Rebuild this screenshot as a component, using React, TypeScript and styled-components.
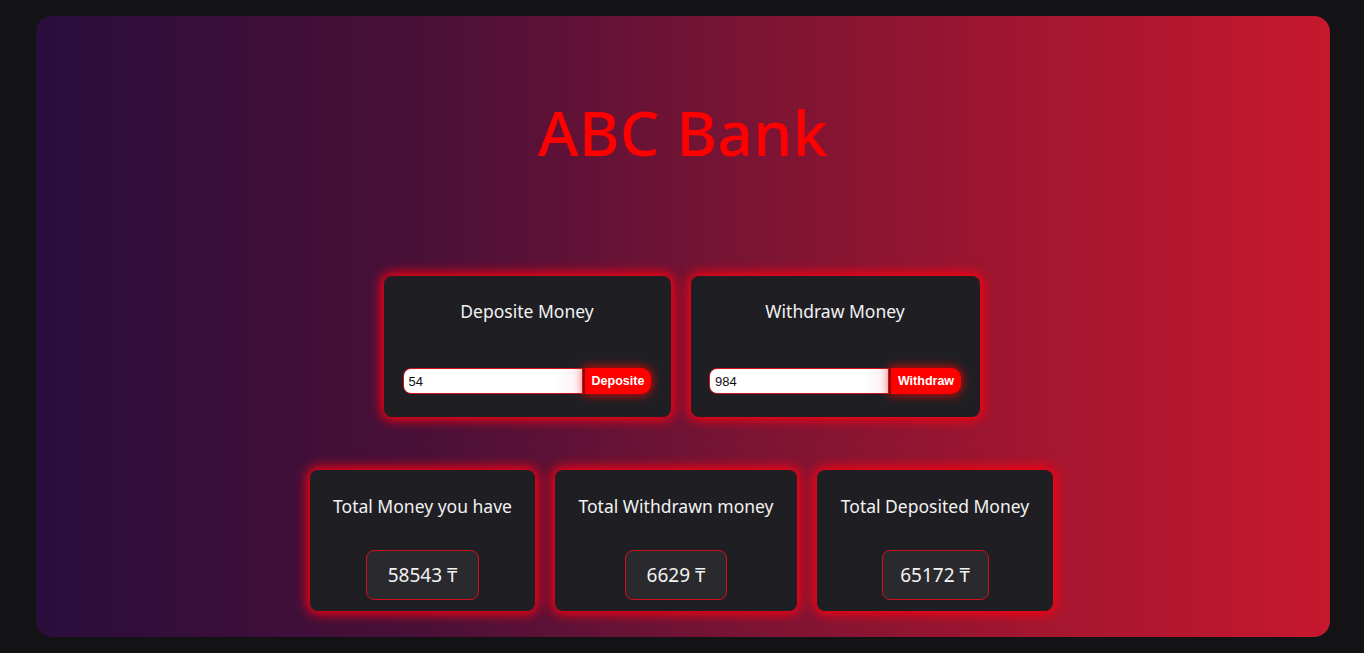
import React from "react";
import styled, { createGlobalStyle } from "styled-components";

const Global = createGlobalStyle`
  html, body { margin: 0; padding: 0; background: #131316; }
  body { font-family: "Noto Sans", "DejaVu Sans", sans-serif; }
  * { box-sizing: border-box; }
`;

const Page = styled.div`
  padding: 16px 34px 16px 36px;
  height: 653px;
`;

const Panel = styled.main`
  height: 621px;
  border-radius: 16px;
  background: linear-gradient(90deg, #2a0d3c 0%, #4a1038 30%, #7a1434 55%, #a8162f 80%, #c6182f 100%);
  display: flex;
  flex-direction: column;
  align-items: center;
  padding-right: 3px;
`;

const Title = styled.h1`
  margin: 76px 0 0 3px;
  color: #ff0000;
  font-size: 62px;
  font-weight: 500;
  line-height: 80px;
  letter-spacing: 0.5px;
`;

const Row = styled.div<{ $top: number }>`
  display: flex;
  gap: 20px;
  margin-top: ${(p) => p.$top}px;
`;

const Card = styled.section<{ $pt: number; $pb: number; $w: number }>`
  width: ${(p) => p.$w}px;
  background: #1f1f23;
  border-radius: 8px;
  box-shadow: 0 0 12px 3px #ff0010;
  padding: ${(p) => p.$pt}px 18px ${(p) => p.$pb}px;
  display: flex;
  flex-direction: column;
  align-items: center;
  color: #f2f2f2;
`;

const CardTitle = styled.h3`
  margin: 0;
  font-size: 17.5px;
  font-weight: 400;
  line-height: 24px;
  white-space: nowrap;
`;

const Form = styled.div`
  margin-top: 45px;
  display: flex;
  align-items: center;
  gap: 2px;
`;

const Input = styled.input`
  width: 180px;
  height: 26px;
  border: 1px solid #d0101c;
  border-radius: 8px 0 0 8px;
  background: linear-gradient(90deg, #ffffff 85%, #fbeef0 100%);
  font-family: "Liberation Sans", Arial, sans-serif;
  font-size: 13px;
  color: #111;
  padding: 0 5px;
  outline: none;
`;

const Button = styled.button`
  height: 26px;
  padding: 0 7px;
  border: none;
  border-radius: 0 10px 10px 0;
  background: #ff0000;
  color: #fff;
  font-family: "Liberation Sans", Arial, sans-serif;
  font-size: 12.5px;
  font-weight: 700;
  box-shadow: 0 0 8px 2px rgba(255, 0, 0, 0.7);
  cursor: pointer;
`;

const ValueBox = styled.div<{ $w: number }>`
  margin-top: 32px;
  width: ${(p) => p.$w}px;
  height: 50px;
  border: 1px solid #d0101c;
  border-radius: 8px;
  background: #2a2a2e;
  display: flex;
  align-items: center;
  justify-content: center;
  font-size: 19px;
  color: #f2f2f2;
`;

export default function App() {
  return (
    <>
      <Global />
      <Page>
        <Panel>
          <Title>ABC Bank</Title>
          <Row $top={104}>
            <Card $pt={23} $pb={23} $w={287}>
              <CardTitle>Deposite Money</CardTitle>
              <Form>
                <Input defaultValue="54" />
                <Button>Deposite</Button>
              </Form>
            </Card>
            <Card $pt={23} $pb={23} $w={289}>
              <CardTitle>Withdraw Money</CardTitle>
              <Form>
                <Input defaultValue="984" />
                <Button>Withdraw</Button>
              </Form>
            </Card>
          </Row>
          <Row $top={53}>
            <Card $pt={24} $pb={11} $w={225}>
              <CardTitle>Total Money you have</CardTitle>
              <ValueBox $w={113}>58543 ₸</ValueBox>
            </Card>
            <Card $pt={24} $pb={11} $w={242}>
              <CardTitle>Total Withdrawn money</CardTitle>
              <ValueBox $w={102}>6629 ₸</ValueBox>
            </Card>
            <Card $pt={24} $pb={11} $w={236}>
              <CardTitle>Total Deposited Money</CardTitle>
              <ValueBox $w={107}>65172 ₸</ValueBox>
            </Card>
          </Row>
        </Panel>
      </Page>
    </>
  );
}
